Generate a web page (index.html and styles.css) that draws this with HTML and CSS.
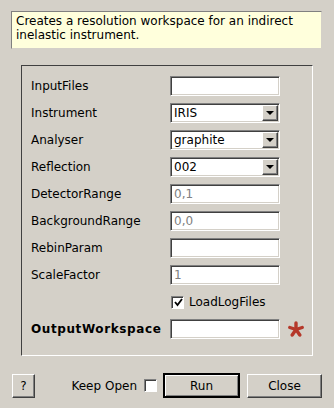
FILE: index.html
```html
<!DOCTYPE html>
<html lang="en">
<head>
    <meta charset="UTF-8">
    <title>IndirectResolution</title>
    <link rel="stylesheet" href="styles.css">
</head>
<body>
    <div class="desc">Creates a resolution workspace for an indirect inelastic instrument.</div>

    <div class="group">
        <label class="lbl">InputFiles</label>
        <input class="edit" type="text" value="">
        <span></span>

        <label class="lbl">Instrument</label>
        <div class="combo"><span class="combo-text">IRIS</span><span class="arrow"></span></div>
        <span></span>

        <label class="lbl">Analyser</label>
        <div class="combo"><span class="combo-text">graphite</span><span class="arrow"></span></div>
        <span></span>

        <label class="lbl">Reflection</label>
        <div class="combo"><span class="combo-text">002</span><span class="arrow"></span></div>
        <span></span>

        <label class="lbl">DetectorRange</label>
        <input class="edit hint" type="text" placeholder="0,1">
        <span></span>

        <label class="lbl">BackgroundRange</label>
        <input class="edit hint" type="text" placeholder="0,0">
        <span></span>

        <label class="lbl">RebinParam</label>
        <input class="edit" type="text" value="">
        <span></span>

        <label class="lbl">ScaleFactor</label>
        <input class="edit hint" type="text" placeholder="1">
        <span></span>

        <span></span>
        <div class="check-row"><span class="check checked"><svg width="9" height="9" viewBox="0 0 9 9"><path d="M1 4 L3.5 7 L8 1" fill="none" stroke="#000" stroke-width="1.8"/></svg></span>LoadLogFiles</div>
        <span></span>

        <label class="lbl bold">OutputWorkspace</label>
        <input class="edit" type="text" value="">
        <svg class="star" width="16" height="16" viewBox="0 0 16 16">
            <g stroke="#b5382a" stroke-width="3.4" stroke-linecap="round">
                <line x1="8" y1="8.5" x2="8" y2="2"/>
                <line x1="8" y1="8.5" x2="14.2" y2="6.5"/>
                <line x1="8" y1="8.5" x2="11.8" y2="14"/>
                <line x1="8" y1="8.5" x2="4.2" y2="14"/>
                <line x1="8" y1="8.5" x2="1.8" y2="6.5"/>
            </g>
        </svg>
    </div>

    <div class="buttons">
        <button class="btn help">?</button>
        <span class="spacer"></span>
        <span class="keep">Keep Open</span>
        <span class="check"></span>
        <button class="btn run">Run</button>
        <button class="btn close">Close</button>
    </div>
</body>
</html>
```

FILE: styles.css
```css
body {
    margin: 0;
    background: #d4d0c8;
    font-family: "DejaVu Sans", sans-serif;
    font-size: 12px;
    color: #000;
}
.desc {
    margin: 11px 12px 0 11px;
    height: 32px;
    padding: 2px 4px 2px 4px;
    line-height: 14px;
    background: #ffffdc;
    border: 1px solid;
    border-color: #808080 #d4d0c8 #d4d0c8 #808080;
}
.group {
    box-sizing: border-box;
    margin: 16px 21px 0 21px;
    height: 291px;
    padding: 10px 0 0 9px;
    border: 1px solid;
    border-color: #404040 #fff #fff #404040;
    display: grid;
    grid-template-columns: 139px 110px 1fr;
    grid-auto-rows: 20px;
    row-gap: 7px;
    align-items: center;
    align-content: start;
}
.lbl {
    white-space: nowrap;
}
.bold {
    font-weight: bold;
    letter-spacing: 0.6px;
}
.edit, .combo {
    box-sizing: border-box;
    width: 110px;
    height: 20px;
    margin: 0;
    padding: 0 3px;
    background: #fff;
    border: 1px solid;
    border-color: #808080 #fff #fff #808080;
    box-shadow: inset 1px 1px #404040, inset -1px -1px #d4d0c8;
    font-family: "DejaVu Sans", sans-serif;
    font-size: 12px;
    outline: none;
}
.hint::placeholder {
    color: #808080;
    opacity: 1;
}
.combo {
    display: flex;
    align-items: center;
    padding: 1px 1px 1px 3px;
}
.combo-text {
    flex: 1;
}
.arrow {
    box-sizing: border-box;
    width: 16px;
    height: 16px;
    background: #d4d0c8;
    border: 1px solid;
    border-color: #fff #404040 #404040 #fff;
    box-shadow: inset -1px -1px #808080;
    position: relative;
}
.arrow::after {
    content: "";
    position: absolute;
    left: 3px;
    top: 5px;
    border-left: 4px solid transparent;
    border-right: 4px solid transparent;
    border-top: 4px solid #000;
}
.check-row {
    display: flex;
    align-items: center;
    white-space: nowrap;
    padding-left: 1px;
}
.check {
    box-sizing: border-box;
    width: 13px;
    height: 13px;
    background: #fff;
    border: 1px solid;
    border-color: #808080 #fff #fff #808080;
    box-shadow: inset 1px 1px #404040;
    display: flex;
    align-items: center;
    justify-content: center;
}
.check-row .check {
    margin-right: 5px;
}
.check svg {
    margin: 1px 0 0 1px;
}
.star {
    margin-left: 8px;
}
.buttons {
    display: flex;
    align-items: center;
    margin: 17px 12px 0 12px;
    height: 25px;
}
.spacer {
    flex: 1;
}
.keep {
    margin-right: 7px;
}
.btn {
    box-sizing: border-box;
    height: 24px;
    background: #d4d0c8;
    border: 1px solid;
    border-color: #fff #404040 #404040 #fff;
    box-shadow: inset -1px -1px #808080;
    font-family: "DejaVu Sans", sans-serif;
    font-size: 12px;
    color: #000;
    padding: 0;
}
.help {
    width: 23px;
}
.run {
    width: 77px;
    height: 25px;
    margin-left: 6px;
    border-width: 2px;
    border-color: #000;
    box-shadow: inset 1px 1px #fff, inset -1px -1px #808080;
}
.close {
    width: 75px;
    margin-left: 7px;
}
```
